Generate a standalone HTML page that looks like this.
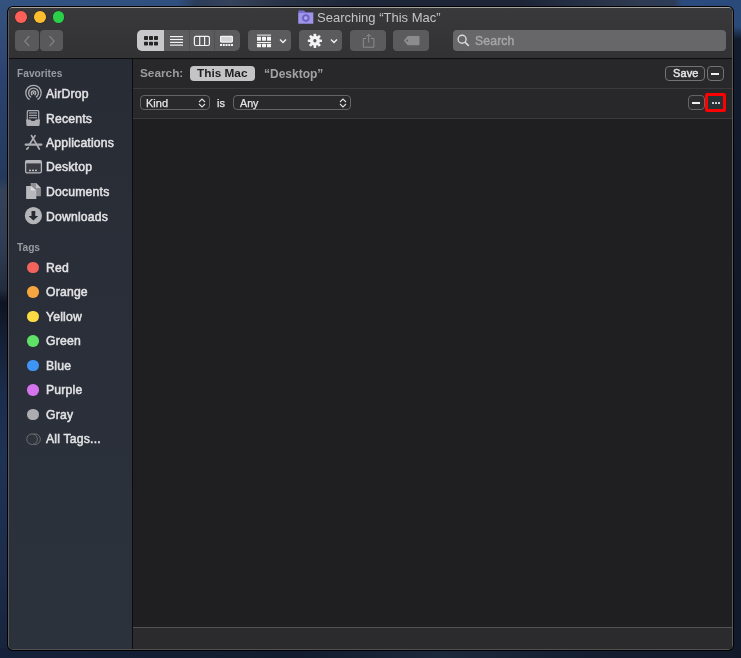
<!DOCTYPE html>
<html><head><meta charset="utf-8">
<style>
*{box-sizing:border-box;margin:0;padding:0}
html,body{width:741px;height:658px;overflow:hidden}
body{position:relative;font-family:"Liberation Sans",sans-serif;background:#141e30}
#bgT{left:0;top:0;width:741px;height:10px;background:linear-gradient(90deg,#325282 0%,#2f4f7f 24%,#2b3c5a 26.5%,#34425a 31%,#283246 38%,#1d2638 48%,#1c2436 70%,#252f44 78%,#2e3a50 86%,#2c3c58 91%,#2b4a7e 92%,#2a4a7e 100%)}
#bgL{left:0;top:0;width:10px;height:658px;background:linear-gradient(180deg,#35527f 0%,#314b76 6%,#2b4270 12%,#23395c 27%,#34435a 29%,#2f3b52 38%,#222c3e 44%,#0d1321 46%,#131d31 50%,#1b2d4c 60%,#1e3254 70%,#1c2d4b 85%,#16233b 100%)}
#bgR{left:731px;top:0;width:10px;height:658px;background:linear-gradient(180deg,#2a4a7a 0%,#2a4a7a 4%,#131c2c 6%,#101828 50%,#111a2a 100%)}
#bgB{left:0;top:648px;width:741px;height:10px;background:linear-gradient(90deg,#15213a 0%,#121c2e 40%,#1c283c 60%,#141e30 80%,#121a2a 100%)}
.a{position:absolute}
.t,.si,.side-h{will-change:transform}
.t{position:absolute;white-space:nowrap;line-height:1}
#win{left:7px;top:6px;width:727px;height:645px;background:#000;border-radius:6px}
#inner{left:8px;top:7px;width:725px;height:643px;border:1px solid #5a5a5c;border-top-color:#a3a39f;border-bottom-color:#505052;border-radius:5px;overflow:hidden;background:#1f1f21}
#tb{left:0;top:0;width:723px;height:50px;background:linear-gradient(#39393b,#323234)}
#tbline{left:0;top:50px;width:723px;height:1px;background:#0e0e0e}
#side{left:0;top:51px;width:123px;height:590px;background:linear-gradient(#282c35,#2a2f39 50%,#2c323c)}
#sline{left:123px;top:51px;width:1px;height:590px;background:#0c0c0c}
#main{left:124px;top:51px;width:599px;height:590px;background:#1f1f21}
.bar{left:0;width:599px;background:#28282a}
.sep{left:0;width:599px;height:1px;background:#3a3a3c}
.btn{position:absolute;top:22px;height:21px;background:#5b5b5d;border-radius:4px}
.tl{position:absolute;width:11.6px;height:11.6px;border-radius:50%;top:3.25px;box-shadow:0 0 0 0.5px rgba(0,0,0,0.25)}
.side-h{position:absolute;left:7.9px;font-size:10.2px;font-weight:700;color:#989ba1;line-height:1}
.si{position:absolute;left:37px;font-size:12.2px;font-weight:400;letter-spacing:0.2px;-webkit-text-stroke:0.5px #e2e3e5;color:#e2e3e5;line-height:1;white-space:nowrap}
.dot{position:absolute;left:18.35px;width:11.5px;height:11.5px;border-radius:50%}
</style></head><body>
<div id="bgT" class="a"></div><div id="bgL" class="a"></div><div id="bgR" class="a"></div><div id="bgB" class="a"></div>
<div id="win" class="a"></div>
<div id="inner" class="a">
  <div id="tb" class="a"></div>
  <div id="tbline" class="a"></div>
  <!-- traffic lights -->
  <div class="tl" style="left:6.2px;background:#fe5f57"></div>
  <div class="tl" style="left:25.1px;background:#fdbd2e"></div>
  <div class="tl" style="left:43.7px;background:#2bd049"></div>
  <!-- title -->
  <svg class="a" style="left:288.5px;top:2.4px" width="16" height="14" viewBox="0 0 16 14">
    <path d="M0.4 0.6 H6 L7.6 2.2 H15.2 V13.6 H0.4Z" fill="#7a6dd0"/>
    <rect x="0.4" y="2.9" width="14.8" height="10.7" fill="#9f95e6"/>
    <circle cx="7.8" cy="8.1" r="2.9" fill="none" stroke="#6e5fc6" stroke-width="1.8"/>
    <circle cx="7.8" cy="8.1" r="1.2" fill="#b3aaf0"/>
  </svg>
  <div class="t" style="left:308px;top:3.3px;font-size:13px;color:#c4c4c6">Searching “This Mac”</div>
  <!-- back/forward -->
  <div class="btn" style="left:6px;top:22px;width:24px;background:#59595b"></div>
  <div class="btn" style="left:31px;top:22px;width:23px;background:#59595b"></div>
  <svg class="a" style="left:6px;top:22px" width="49" height="21">
    <path d="M14.3 6.2 L9.8 11.2 L14.3 16.2" stroke="#858587" stroke-width="1.2" fill="none"/>
    <path d="M34.6 6.2 L39.1 11.2 L34.6 16.2" stroke="#858587" stroke-width="1.2" fill="none"/>
  </svg>
  <!-- view segmented -->
  <div class="a" style="left:128px;top:22px;width:103px;height:21px;background:#5b5b5d;border-radius:5px;overflow:hidden">
    <div class="a" style="left:0;top:0;width:27px;height:21px;background:#c8c8ca"></div>
    <div class="a" style="left:52px;top:0;width:1px;height:21px;background:#505052"></div>
    <div class="a" style="left:77px;top:0;width:1px;height:21px;background:#505052"></div>
  </div>
  <svg class="a" style="left:128px;top:22px" width="103" height="21">
    <g fill="#262626"><rect x="7" y="6" width="4" height="4" rx="0.8"/><rect x="12" y="6" width="4" height="4" rx="0.8"/><rect x="17" y="6" width="4" height="4" rx="0.8"/>
    <rect x="7" y="11.7" width="4" height="3.8" rx="0.8"/><rect x="12" y="11.7" width="4" height="3.8" rx="0.8"/><rect x="17" y="11.7" width="4" height="3.8" rx="0.8"/></g>
    <g fill="#f2f2f2"><rect x="33" y="6" width="13" height="1.2"/><rect x="33" y="8.9" width="13" height="1.2"/><rect x="33" y="11.8" width="13" height="1.2"/><rect x="33" y="14.5" width="13" height="1.2"/></g>
    <g fill="none" stroke="#f2f2f2" stroke-width="1.2"><rect x="57.4" y="6.3" width="15" height="9.2" rx="1.5"/><path d="M62.7 6.3V15.5M67.6 6.3V15.5"/></g>
    <rect x="83.6" y="6.3" width="11.8" height="5.8" rx="0.8" fill="#d4d4d4" stroke="#f2f2f2" stroke-width="1.2"/>
    <g fill="#f2f2f2"><rect x="83" y="14" width="2" height="2"/><rect x="85.75" y="14" width="2" height="2"/><rect x="88.5" y="14" width="2" height="2"/><rect x="91.25" y="14" width="2" height="2"/><rect x="94" y="14" width="2" height="2"/></g>
  </svg>
  <!-- group -->
  <div class="btn" style="left:239px;top:22px;width:43px"></div>
  <svg class="a" style="left:239px;top:22px" width="43" height="21">
    <g fill="#f4f4f4"><rect x="9" y="4.6" width="14" height="1"/>
    <rect x="9" y="6.8" width="4" height="4" rx="0.6"/><rect x="14" y="6.8" width="4" height="4" rx="0.6"/><rect x="19" y="6.8" width="4" height="4" rx="0.6"/>
    <rect x="9" y="12" width="14" height="1"/>
    <rect x="9" y="13.7" width="4" height="3.6" rx="0.6"/><rect x="14" y="13.7" width="4" height="3.6" rx="0.6"/><rect x="19" y="13.7" width="4" height="3.6" rx="0.6"/></g>
    <path d="M32 9.5 L35 12.6 L38 9.5" stroke="#f0f0f0" stroke-width="1.4" fill="none"/>
  </svg>
  <!-- gear -->
  <div class="btn" style="left:290px;top:22px;width:43px"></div>
  <svg class="a" style="left:290px;top:22px" width="43" height="21">
    <g transform="translate(15.9,10.8)" fill="#f4f4f4">
      <circle r="5"/>
      <rect x="-1.3" y="-7.1" width="2.6" height="14.2" rx="0.5"/>
      <rect x="-1.3" y="-7.1" width="2.6" height="14.2" rx="0.5" transform="rotate(45)"/>
      <rect x="-1.3" y="-7.1" width="2.6" height="14.2" rx="0.5" transform="rotate(90)"/>
      <rect x="-1.3" y="-7.1" width="2.6" height="14.2" rx="0.5" transform="rotate(135)"/>
      <circle r="1.7" fill="#5b5b5d"/>
    </g>
    <path d="M41.5 9.5 L44.5 12.6 L47.5 9.5" stroke="#f0f0f0" stroke-width="1.4" fill="none" transform="translate(-9.5,0)"/>
  </svg>
  <!-- share (disabled) -->
  <div class="btn" style="left:341px;top:22px;width:36px"></div>
  <svg class="a" style="left:341px;top:22px" width="36" height="21">
    <g stroke="#8c8c8e" stroke-width="1" fill="none"><path d="M16.2 8.5 H13.3 V17.2 H23.9 V8.5 H21"/><path d="M18.7 12.5 V4.2 M16.5 6.6 L18.7 4.2 L20.9 6.6"/></g>
  </svg>
  <!-- tag (disabled) -->
  <div class="btn" style="left:384px;top:22px;width:36px"></div>
  <svg class="a" style="left:384px;top:22px" width="36" height="21">
    <path d="M10.8 10.6 L14.2 6.4 Q14.6 5.9 15.3 5.9 H25.5 Q26.5 5.9 26.5 6.9 V14.3 Q26.5 15.3 25.5 15.3 H15.3 Q14.6 15.3 14.2 14.8Z" fill="#8c8c8e"/><circle cx="14.2" cy="10.6" r="1" fill="#5b5b5d"/>
  </svg>
  <!-- search field -->
  <div class="btn" style="left:444px;top:22px;width:273px;background:#676769"></div>
  <svg class="a" style="left:444px;top:22px" width="30" height="21">
    <circle cx="9.1" cy="9.2" r="4" stroke="#dadada" stroke-width="1.4" fill="none"/><path d="M12 12.1 L15.8 15.9" stroke="#dadada" stroke-width="1.6"/>
  </svg>
  <div class="t" style="left:466px;top:26.7px;font-size:12.2px;letter-spacing:0.15px;-webkit-text-stroke:0.45px #a4a4a6;color:#a4a4a6">Search</div>

  <!-- sidebar -->
  <div id="side" class="a">
    <div class="side-h" style="top:9.5px">Favorites</div>
    <div class="si" style="top:29.17px">AirDrop</div>
    <div class="si" style="top:53.55px">Recents</div>
    <div class="si" style="top:77.93px">Applications</div>
    <div class="si" style="top:102.31px">Desktop</div>
    <div class="si" style="top:126.69px">Documents</div>
    <div class="si" style="top:151.53px">Downloads</div>
    <div class="side-h" style="top:183.8px">Tags</div>
    <div class="si" style="top:202.67px">Red</div>
    <div class="si" style="top:227.17px">Orange</div>
    <div class="si" style="top:251.67px">Yellow</div>
    <div class="si" style="top:276.17px">Green</div>
    <div class="si" style="top:300.67px">Blue</div>
    <div class="si" style="top:325.17px">Purple</div>
    <div class="si" style="top:349.67px">Gray</div>
    <div class="si" style="top:374.17px">All Tags...</div>
    <div class="dot" style="top:202.65px;background:#f3625c"></div>
    <div class="dot" style="top:227.17px;background:#f5a63e"></div>
    <div class="dot" style="top:251.69px;background:#fbdb44"></div>
    <div class="dot" style="top:276.21px;background:#5fe066"></div>
    <div class="dot" style="top:300.73px;background:#3e95f6"></div>
    <div class="dot" style="top:325.25px;background:#d575ee"></div>
    <div class="dot" style="top:349.77px;background:#adadb1"></div>
    <svg class="a" style="left:13px;top:372px" width="20" height="16">
      <circle cx="13" cy="8.2" r="5.3" stroke="#6c6d72" stroke-width="1" fill="none"/><circle cx="10.1" cy="8.2" r="5.3" stroke="#6c6d72" stroke-width="1" fill="#2f333b"/>
    </svg>
    <!-- icons -->
    <svg class="a" style="left:14px;top:24px" width="21" height="21" viewBox="0 0 21 21">
      <g stroke="#aeafb3" fill="none" stroke-width="1.3">
        <circle cx="10.5" cy="10" r="7.7"/>
        <circle cx="10.5" cy="10" r="4.9"/>
        <circle cx="10.5" cy="10" r="2.2"/>
      </g>
      <path d="M10.5 10.5 L4.6 19.5 H16.4Z" fill="#292d36"/>
      <circle cx="10.5" cy="10" r="1" fill="#c4c5c8"/>
    </svg>
    <svg class="a" style="left:16px;top:50px" width="16" height="18" viewBox="0 0 16 18">
      <g fill="none" stroke="#aeafb3" stroke-width="1.2"><path d="M2.3 11 V2.5 Q2.3 1.6 3.2 1.6 H12.8 Q13.7 1.6 13.7 2.5 V11"/></g>
      <g fill="#aeafb3"><rect x="4" y="3.4" width="8" height="1.1"/><rect x="4" y="5.8" width="8" height="1.1"/><rect x="4" y="8.2" width="8" height="1.1"/>
      <path d="M1 10.4 H5.2 Q6 12 8 12 Q10 12 10.8 10.4 H15 L14.6 16 Q14.5 17 13.6 17 H2.4 Q1.5 17 1.4 16Z"/></g>
    </svg>
    <svg class="a" style="left:15px;top:75px" width="19" height="17" viewBox="0 0 19 17">
      <g stroke="#aeafb3" stroke-width="1.7" stroke-linecap="round" fill="none">
        <path d="M7.5 1.6 L15.3 15"/><path d="M11.1 1.6 L5.6 10.2"/><path d="M4.4 13.5 L2.8 15.2"/><path d="M1.6 10.6 H17.4" stroke-width="2.1"/>
      </g>
    </svg>
    <svg class="a" style="left:15px;top:100px" width="19" height="16" viewBox="0 0 19 16">
      <rect x="1.6" y="1.6" width="15.8" height="12.3" rx="1.6" fill="#393c43" stroke="#b4b5b9" stroke-width="1.3"/>
      <rect x="1.6" y="1.6" width="15.8" height="2.8" fill="#b4b5b9"/>
      <g fill="#e2e2e4"><circle cx="6" cy="11.4" r="0.85"/><circle cx="9" cy="11.4" r="0.85"/><circle cx="12" cy="11.4" r="0.85"/></g>
    </svg>
    <svg class="a" style="left:16px;top:123px" width="17" height="18" viewBox="0 0 17 18">
      <path d="M5.6 1 H11 L15.9 5.9 V14.2 H5.6Z" fill="#8e8f93"/>
      <path d="M11 1 V5.9 H15.9Z" fill="#c2c3c6"/>
      <path d="M1.1 4 H5.8 L11.3 8.6 V16.9 H1.1Z" fill="#b8b9bc"/>
      <path d="M5.8 4 V8.6 H11.3Z" fill="#dcdcde"/>
    </svg>
    <svg class="a" style="left:15px;top:147px" width="19" height="19" viewBox="0 0 19 19">
      <circle cx="9.4" cy="9.7" r="8.6" fill="#b4b5b8"/>
      <path d="M7.5 5 H11.3 V10 H14.2 L9.4 14.6 L4.6 10 H7.5Z" fill="#262a31"/>
    </svg>
    </div>
  <div id="sline" class="a"></div>

  <!-- main -->
  <div id="main" class="a">
    <div class="a bar" style="top:0;height:29px"></div>
    <div class="a sep" style="top:29px"></div>
    <div class="a bar" style="top:30px;height:29px"></div>
    <div class="a sep" style="top:59px"></div>
    <div class="a sep" style="top:568px;background:#525254"></div>
    <div class="a" style="left:0;top:569px;width:599px;height:21px;background:#2b2a2d"></div>

    <div class="t" style="left:7px;top:9px;font-size:11.8px;font-weight:700;color:#9c9c9e">Search:</div>
    <div class="a" style="left:56.5px;top:7px;width:65.5px;height:15px;background:#c4c4c6;border-radius:4px"></div>
    <div class="t" style="left:64.3px;top:8.8px;font-size:11.8px;font-weight:700;color:#1e1e1e">This Mac</div>
    <div class="t" style="left:130.5px;top:8.6px;font-size:12px;font-weight:700;color:#a2a2a4">“Desktop”</div>
    <div class="a" style="left:532px;top:7px;width:40px;height:15px;border:1px solid #737375;border-radius:4px;background:#2c2c2e"></div>
    <div class="t" style="left:539.5px;top:9px;font-size:11px;-webkit-text-stroke:0.45px #e4e4e4;letter-spacing:0.1px;color:#e4e4e4">Save</div>
    <div class="a" style="left:574px;top:7px;width:17px;height:15px;border:1px solid #737375;border-radius:4px;background:#2c2c2e"></div>
    <div class="a" style="left:578px;top:14px;width:8px;height:2px;background:#eee"></div>

    <div class="a" style="left:7px;top:36px;width:70px;height:15px;border:1px solid #646466;border-radius:4px;background:#29292b"></div>
    <div class="t" style="left:13px;top:39px;font-size:11px;-webkit-text-stroke:0.25px #e6e6e6;color:#e6e6e6">Kind</div>
    <div class="t" style="left:84px;top:39px;font-size:11px;-webkit-text-stroke:0.25px #e6e6e6;color:#e6e6e6">is</div>
    <div class="a" style="left:100px;top:36px;width:118px;height:15px;border:1px solid #646466;border-radius:4px;background:#29292b"></div>
    <div class="t" style="left:107px;top:39px;font-size:10.7px;-webkit-text-stroke:0.25px #e6e6e6;color:#e6e6e6">Any</div>
    <svg class="a" style="left:65px;top:39px" width="8" height="10"><path d="M1 4 L4 1 L7 4 M1 6 L4 9 L7 6" stroke="#ddd" stroke-width="1.1" fill="none"/></svg>
    <svg class="a" style="left:206px;top:39px" width="8" height="10"><path d="M1 4 L4 1 L7 4 M1 6 L4 9 L7 6" stroke="#ddd" stroke-width="1.1" fill="none"/></svg>
    <div class="a" style="left:555px;top:36px;width:17px;height:15px;border:1px solid #646466;border-radius:4px;background:#2c2c2e"></div>
    <div class="a" style="left:559px;top:43px;width:8px;height:2px;background:#eee"></div>
    <div class="a" style="left:572px;top:34px;width:21px;height:19px;border:3px solid #fe0000;border-radius:2px;background:#263136"></div>
    <div class="a" style="left:578.5px;top:42.5px;width:2px;height:2px;border-radius:0.5px;background:#d4d6d8"></div>
    <div class="a" style="left:581.5px;top:42.5px;width:2px;height:2px;border-radius:0.5px;background:#d4d6d8"></div>
    <div class="a" style="left:584.5px;top:42.5px;width:2px;height:2px;border-radius:0.5px;background:#d4d6d8"></div>
  </div>
</div>
</body></html>
